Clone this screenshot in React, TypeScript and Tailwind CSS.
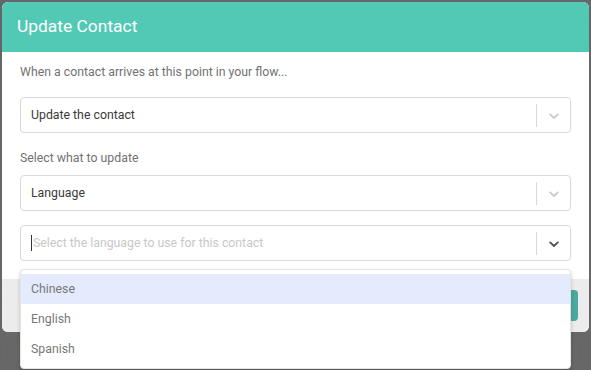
import { ReactNode } from 'react';

const Chevron = ({ dark }: { dark?: boolean }) => (
  <svg width="10" height="7" viewBox="0 0 10 7" className={dark ? 'text-[#555]' : 'text-[#ccc]'}>
    <path d="M1.2 1.4 L5 5 L8.8 1.4" fill="none" stroke="currentColor" strokeWidth="1.9" strokeLinecap="round" strokeLinejoin="round" />
  </svg>
);

const SelectBox = ({ children, dark }: { children: ReactNode; dark?: boolean }) => (
  <div className="flex h-[36px] items-center rounded-[4px] border border-[#d9d9d9] bg-white">
    <div className="flex flex-1 items-center pl-[10px] text-[12.3px]">{children}</div>
    <div className="h-[23px] w-px bg-[#d9d9d9]" />
    <div className="flex w-[33px] items-center justify-center pl-px pt-[2px]">
      <Chevron dark={dark} />
    </div>
  </div>
);

const languages = ['Chinese', 'English', 'Spanish'];

export default function App() {
  return (
    <div className="h-[370px] w-[591px] overflow-hidden bg-[#676767] bg-[linear-gradient(to_right,#62666a_1px,transparent_1px),linear-gradient(to_bottom,#62666a_1px,transparent_1px)] bg-[length:20px_20px] pl-[2px] pt-[2px] font-['Roboto',sans-serif]">
      <div className="w-[587px] rounded-[6px] bg-white">
        {/* Header */}
        <div className="flex h-[50px] items-center rounded-t-[6px] bg-[#52c9b4] px-[15px] pb-[1px]">
          <h1 className="text-[17.4px] font-normal text-white">Update Contact</h1>
        </div>

        {/* Body */}
        <div className="px-[18px] pb-[18px] pt-[12px]">
          <div className="mb-[16px] text-[12.3px] leading-[17px] text-[#727272]">
            When a contact arrives at this point in your flow...
          </div>
          <SelectBox>
            <span className="text-[#3a3a3a]">Update the contact</span>
          </SelectBox>

          <div className="mb-[9px] mt-[17px] text-[12.3px] leading-[16px] text-[#727272]">Select what to update</div>
          <SelectBox>
            <span className="text-[#3a3a3a]">Language</span>
          </SelectBox>

          <div className="relative mt-[14px]">
            <SelectBox dark>
              <span className="mr-[1px] h-[16px] w-px bg-[#333]" />
              <span className="text-[#c8c8c8]">Select the language to use for this contact</span>
            </SelectBox>

            {/* Open menu */}
            <div className="absolute left-0 right-0 top-[calc(100%+8px)] z-10 rounded-[4px] border border-[#e4e4e4] bg-white py-[4px] shadow-[0_2px_4px_rgba(0,0,0,0.18)]">
              {languages.map((lang, i) => (
                <div
                  key={lang}
                  className={`flex h-[30px] items-center px-[10px] text-[12.3px] text-[#777] ${i === 0 ? 'bg-[#e4ebfc]' : ''}`}
                >
                  {lang}
                </div>
              ))}
            </div>
          </div>
        </div>

        {/* Footer */}
        <div className="flex h-[53px] items-center justify-end rounded-b-[6px] bg-[#ececec] px-[11px]">
          <button className="h-[31px] rounded-[4px] bg-[#4aaaa1] px-[16px] text-[13px] text-white">Ok</button>
        </div>
      </div>
    </div>
  );
}
